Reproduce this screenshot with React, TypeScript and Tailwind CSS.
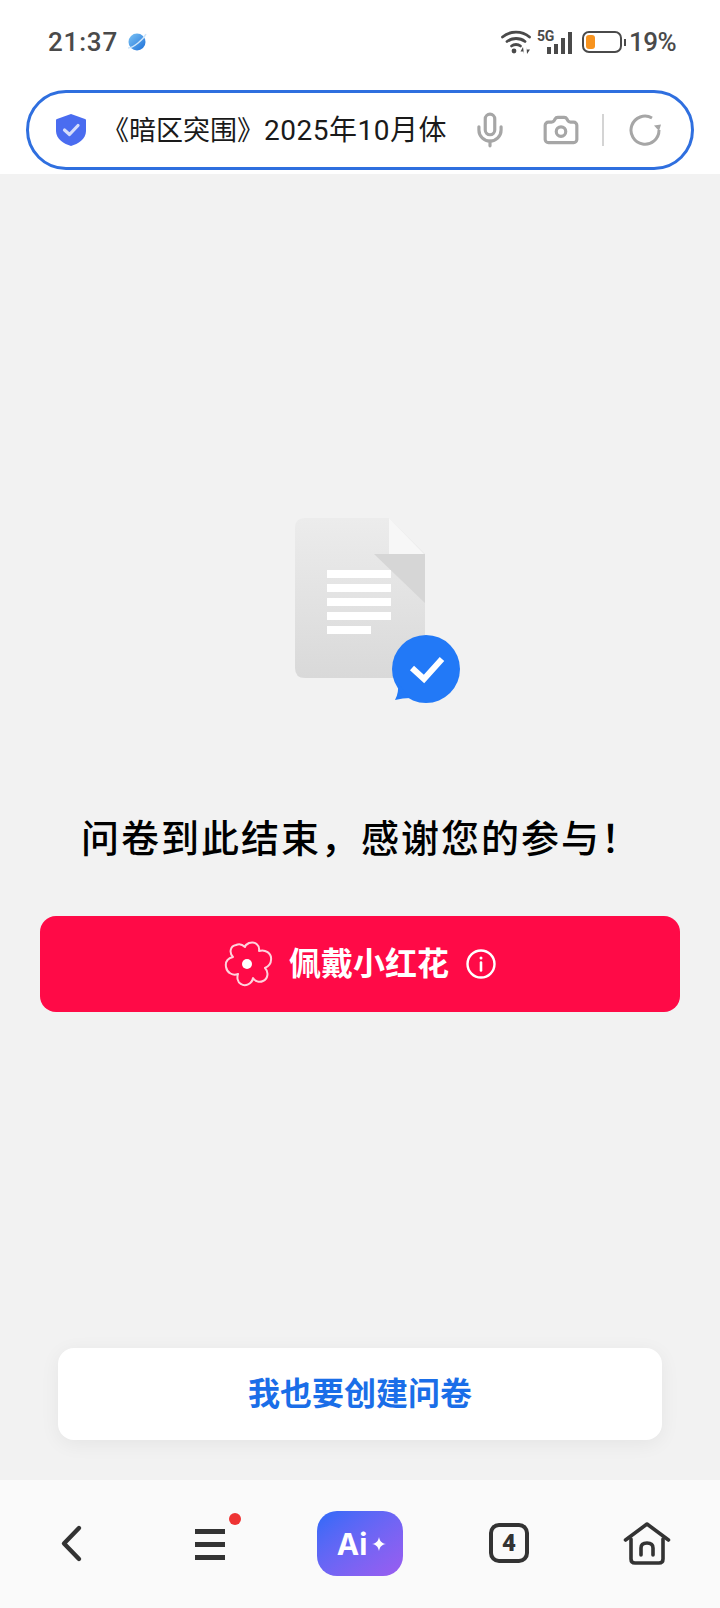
import { Camera, Mic } from "lucide-react"

const cjk = "font-['Roboto','Noto_Sans_CJK_SC',sans-serif]"

function WifiIcon() {
  return (
    <svg width="30" height="24" viewBox="0 0 30 24" fill="none" stroke="#4a4a4a" strokeWidth="2.8" strokeLinecap="round">
      <path d="M1.5 7 C9 0.5 21 0.5 28.5 7" />
      <path d="M6 11.5 C11 7.5 19 7.5 24 11.5" />
      <path d="M10.5 16 C13 14 17 14 19.5 16" />
      <circle cx="13" cy="21" r="2.4" fill="#4a4a4a" stroke="none" />
      <path d="M22 17 L19.5 21.5 H23 V24 Z M26 24 L29 19.5 H25.5 V17 Z" fill="#4a4a4a" stroke="none" />
    </svg>
  )
}

function SignalIcon() {
  return (
    <div className="relative w-[35px] h-[24px]">
      <span className="absolute left-0 -top-[2px] text-[14px] leading-[16px] font-bold tracking-tight text-[#4a4a4a] font-['Roboto',sans-serif]">5G</span>
      <div className="absolute right-0 bottom-0 flex items-end gap-[3px]">
        <div className="w-[4px] h-[7px] bg-[#4a4a4a]" />
        <div className="w-[4px] h-[10px] bg-[#4a4a4a]" />
        <div className="w-[4px] h-[16px] bg-[#4a4a4a]" />
        <div className="w-[4px] h-[22px] bg-[#4a4a4a]" />
      </div>
    </div>
  )
}

function Battery() {
  return (
    <div className="flex items-center gap-[2px]">
      <div className="w-[40px] h-[22px] rounded-[7px] border-2 border-[#4a4a4a] p-[2px]">
        <div className="w-[9px] h-full rounded-[3px] bg-[#f7931e]" />
      </div>
      <div className="w-[2px] h-[7px] bg-[#4a4a4a]" />
    </div>
  )
}

function StatusBar() {
  return (
    <div className="h-[90px] pt-[26px] pl-[48px] pr-[44px] flex items-start justify-between">
      <div className="flex items-center gap-[9px] h-[32px]">
        <span className="text-[26px] leading-[32px] font-medium tracking-[0.8px] text-[#4a4a4a] font-['Roboto',sans-serif]">21:37</span>
        <svg width="20" height="20" viewBox="0 0 20 20">
          <defs>
            <linearGradient id="planet" x1="0" y1="0" x2="1" y2="1">
              <stop offset="0" stopColor="#7cc4f5" />
              <stop offset="1" stopColor="#1c6fd8" />
            </linearGradient>
          </defs>
          <circle cx="10" cy="10" r="8.5" fill="url(#planet)" />
          <path d="M1 16 C6 16 16 8 19 2" fill="none" stroke="#cfe6fa" strokeWidth="1.5" />
        </svg>
      </div>
      <div className="flex items-center h-[32px]">
        <WifiIcon />
        <div className="w-[6px]" />
        <SignalIcon />
        <div className="w-[10px]" />
        <Battery />
        <span className="ml-[3px] text-[26px] leading-[32px] font-medium tracking-[-0.6px] text-[#4a4a4a] font-['Roboto',sans-serif]">19%</span>
      </div>
    </div>
  )
}

function SearchBar() {
  return (
    <div className="px-[26px]">
      <div className="h-[80px] rounded-[40px] border-[3px] border-[#2f6fdf] flex items-center pl-[26px] pr-[28px] bg-white">
        <svg width="32" height="34" viewBox="0 0 32 34" className="shrink-0">
          <path d="M16 1 L30 6 C31 6.4 31 7 31 8 V18 C31 26 23 31 16 33 C9 31 1 26 1 18 V8 C1 7 1 6.4 2 6 Z" fill="#4a6cf0" />
          <path d="M9.5 17 L14.5 21.5 L23 12.5" fill="none" stroke="#d5dcfb" strokeWidth="3.2" strokeLinecap="round" strokeLinejoin="round" />
        </svg>
        <span className={`ml-[15px] pt-[2px] w-[347px] whitespace-nowrap text-[27px] leading-[36px] text-[#1a1a1a] ${cjk}`}>
          《暗区突围》<span className="text-[28px] tracking-[0.5px]">2025年10月体</span>
        </span>
        <Mic size={38} strokeWidth={2} className="ml-[22px] shrink-0 text-[#a6a6a6]" />
        <Camera size={38} strokeWidth={2} className="ml-[33px] shrink-0 text-[#a6a6a6]" />
        <div className="ml-[22px] w-[2px] h-[32px] bg-[#d4d4d4]" />
        <svg width="34" height="34" viewBox="0 0 34 34" fill="none" className="ml-[24px] shrink-0">
          <path d="M24 5 A14 14 0 1 0 31 17" stroke="#a6a6a6" strokeWidth="3" />
          <path d="M31 18 L26 12.5 L33 11.5 Z" fill="#a6a6a6" />
        </svg>
      </div>
    </div>
  )
}

function DocIllustration() {
  return (
    <svg width="166" height="190" viewBox="0 0 166 190">
      <defs>
        <linearGradient id="docBody" x1="0" y1="0" x2="0" y2="1">
          <stop offset="0" stopColor="#ececec" />
          <stop offset="1" stopColor="#d9d9d9" />
        </linearGradient>
      </defs>
      <path d="M10 0 H94 L130 36 V150 Q130 160 120 160 H10 Q0 160 0 150 V10 Q0 0 10 0 Z" fill="url(#docBody)" />
      <path d="M94 0 L130 37 H94 Z" fill="#f7f7f7" />
      <path d="M79 36 H130 V85 Z" fill="#d6d6d6" />
      <rect x="32" y="52" width="64" height="8" fill="#fff" />
      <rect x="32" y="66" width="64" height="8" fill="#fff" />
      <rect x="32" y="80" width="64" height="8" fill="#fff" />
      <rect x="32" y="94" width="64" height="8" fill="#fff" />
      <rect x="32" y="108" width="44" height="8" fill="#fff" />
      <circle cx="131" cy="151" r="34" fill="#2279f7" />
      <path d="M103 165 Q104 175 100 182 Q108 180 115 180 Z" fill="#2279f7" />
      <path d="M117 150 L129 161 L147 141" fill="none" stroke="#fff" strokeWidth="6" />
    </svg>
  )
}

function FlowerIcon() {
  return (
    <svg width="50" height="48" viewBox="0 0 50 48" fill="none" stroke="#ffd2dc" strokeWidth="2" strokeLinejoin="round">
      <path d="M25 3 C31 1 36 5 35 11 C41 9 48 13 47 20 C47 25 43 27 41 28 C45 32 44 39 39 41 C35 43 31 41 29 38 C28 44 21 47 17 44 C13 42 13 37 14 34 C9 36 3 33 2 27 C1 21 5 18 9 17 C5 13 6 6 12 5 C16 3 19 5 21 7 C21 5 23 4 25 3 Z" />
      <circle cx="23" cy="24" r="5" fill="#fff" stroke="none" />
    </svg>
  )
}

function InfoIcon() {
  return (
    <svg width="30" height="30" viewBox="0 0 30 30" fill="none" stroke="#fff" strokeWidth="2.4" strokeLinecap="round">
      <circle cx="15" cy="15" r="13.5" />
      <circle cx="15" cy="9" r="1.5" fill="#fff" stroke="none" />
      <path d="M15 13.5 V21.5" strokeWidth="2.6" />
    </svg>
  )
}

function BottomNav() {
  return (
    <div className="h-[128px] bg-[#fafafa] flex items-start pt-[31px] relative">
      {/* back */}
      <svg width="30" height="42" viewBox="0 0 30 42" fill="none" stroke="#333" strokeWidth="4.4" strokeLinecap="round" strokeLinejoin="round" className="ml-[57px] mt-[13px]">
        <path d="M22 4 L7 19.5 L22 35" />
      </svg>
      {/* menu */}
      <div className="relative ml-[108px] mt-[18px] w-[30px] flex flex-col gap-[8px]">
        <div className="h-[5px] bg-[#333]" />
        <div className="h-[5px] bg-[#333]" />
        <div className="h-[5px] bg-[#333]" />
        <div className="absolute -right-[16px] -top-[16px] w-[12px] h-[12px] rounded-full bg-[#ee3333]" />
      </div>
      {/* ai */}
      <div className="ml-[92px] w-[86px] h-[65px] rounded-[20px] bg-gradient-to-br from-[#2a6af8] to-[#9a5cf0] flex items-center justify-center gap-[5px] pl-[3px]">
        <span className="text-[30px] leading-none font-bold text-white font-['Inter',sans-serif]">Ai</span>
        <svg width="14" height="14" viewBox="0 0 16 16">
          <path d="M8 0 C9 5 11 7 16 8 C11 9 9 11 8 16 C7 11 5 9 0 8 C5 7 7 5 8 0 Z" fill="#fff" />
        </svg>
      </div>
      {/* tabs */}
      <div className="ml-[86px] mt-[12px] w-[40px] h-[40px] rounded-[10px] border-[4px] border-[#333] flex items-center justify-center">
        <span className="text-[24px] leading-none font-black text-[#333] font-['Roboto',sans-serif]">4</span>
      </div>
      {/* home */}
      <svg width="48" height="44" viewBox="0 0 48 44" fill="none" stroke="#333" strokeWidth="3.6" strokeLinecap="round" strokeLinejoin="round" className="ml-[94px] mt-[11px]">
        <path d="M2.5 18 L24 2 L45.5 18" />
        <path d="M8 17 V37 Q8 41 12 41 H36 Q40 41 40 37 V17" />
        <path d="M18 33 V26 Q18 21 24 21 Q30 21 30 26 V33" />
      </svg>
    </div>
  )
}

export default function App() {
  return (
    <div className="w-[720px] h-[1608px] flex flex-col bg-white overflow-hidden">
      <div className="h-[174px] bg-white">
        <StatusBar />
        <SearchBar />
      </div>

      <div className="flex-1 bg-[#f2f2f2] flex flex-col items-center">
        <div className="pt-[344px] pl-[36px]">
          <DocIllustration />
        </div>
        <h1 className={`mt-[107px] w-full pl-[81px] whitespace-nowrap text-[38px] leading-[48px] font-medium tracking-[2px] text-black ${cjk}`}>
          问卷到此结束，感谢您的参与！
        </h1>
        <button className="mt-[53px] w-[640px] h-[96px] rounded-[16px] bg-[#ff0a47] flex items-center justify-center">
          <FlowerIcon />
          <span className={`ml-[15px] text-[32px] leading-[40px] font-bold text-white ${cjk}`}>佩戴小红花</span>
          <span className="ml-[17px]">
            <InfoIcon />
          </span>
        </button>
        <div className="flex-1" />
        <button className={`mb-[40px] w-[604px] h-[92px] rounded-[16px] bg-white shadow-[0_4px_20px_rgba(0,0,0,0.06)] text-[32px] font-bold text-[#1a6ee8] ${cjk}`}>
          我也要创建问卷
        </button>
      </div>

      <BottomNav />
    </div>
  )
}
